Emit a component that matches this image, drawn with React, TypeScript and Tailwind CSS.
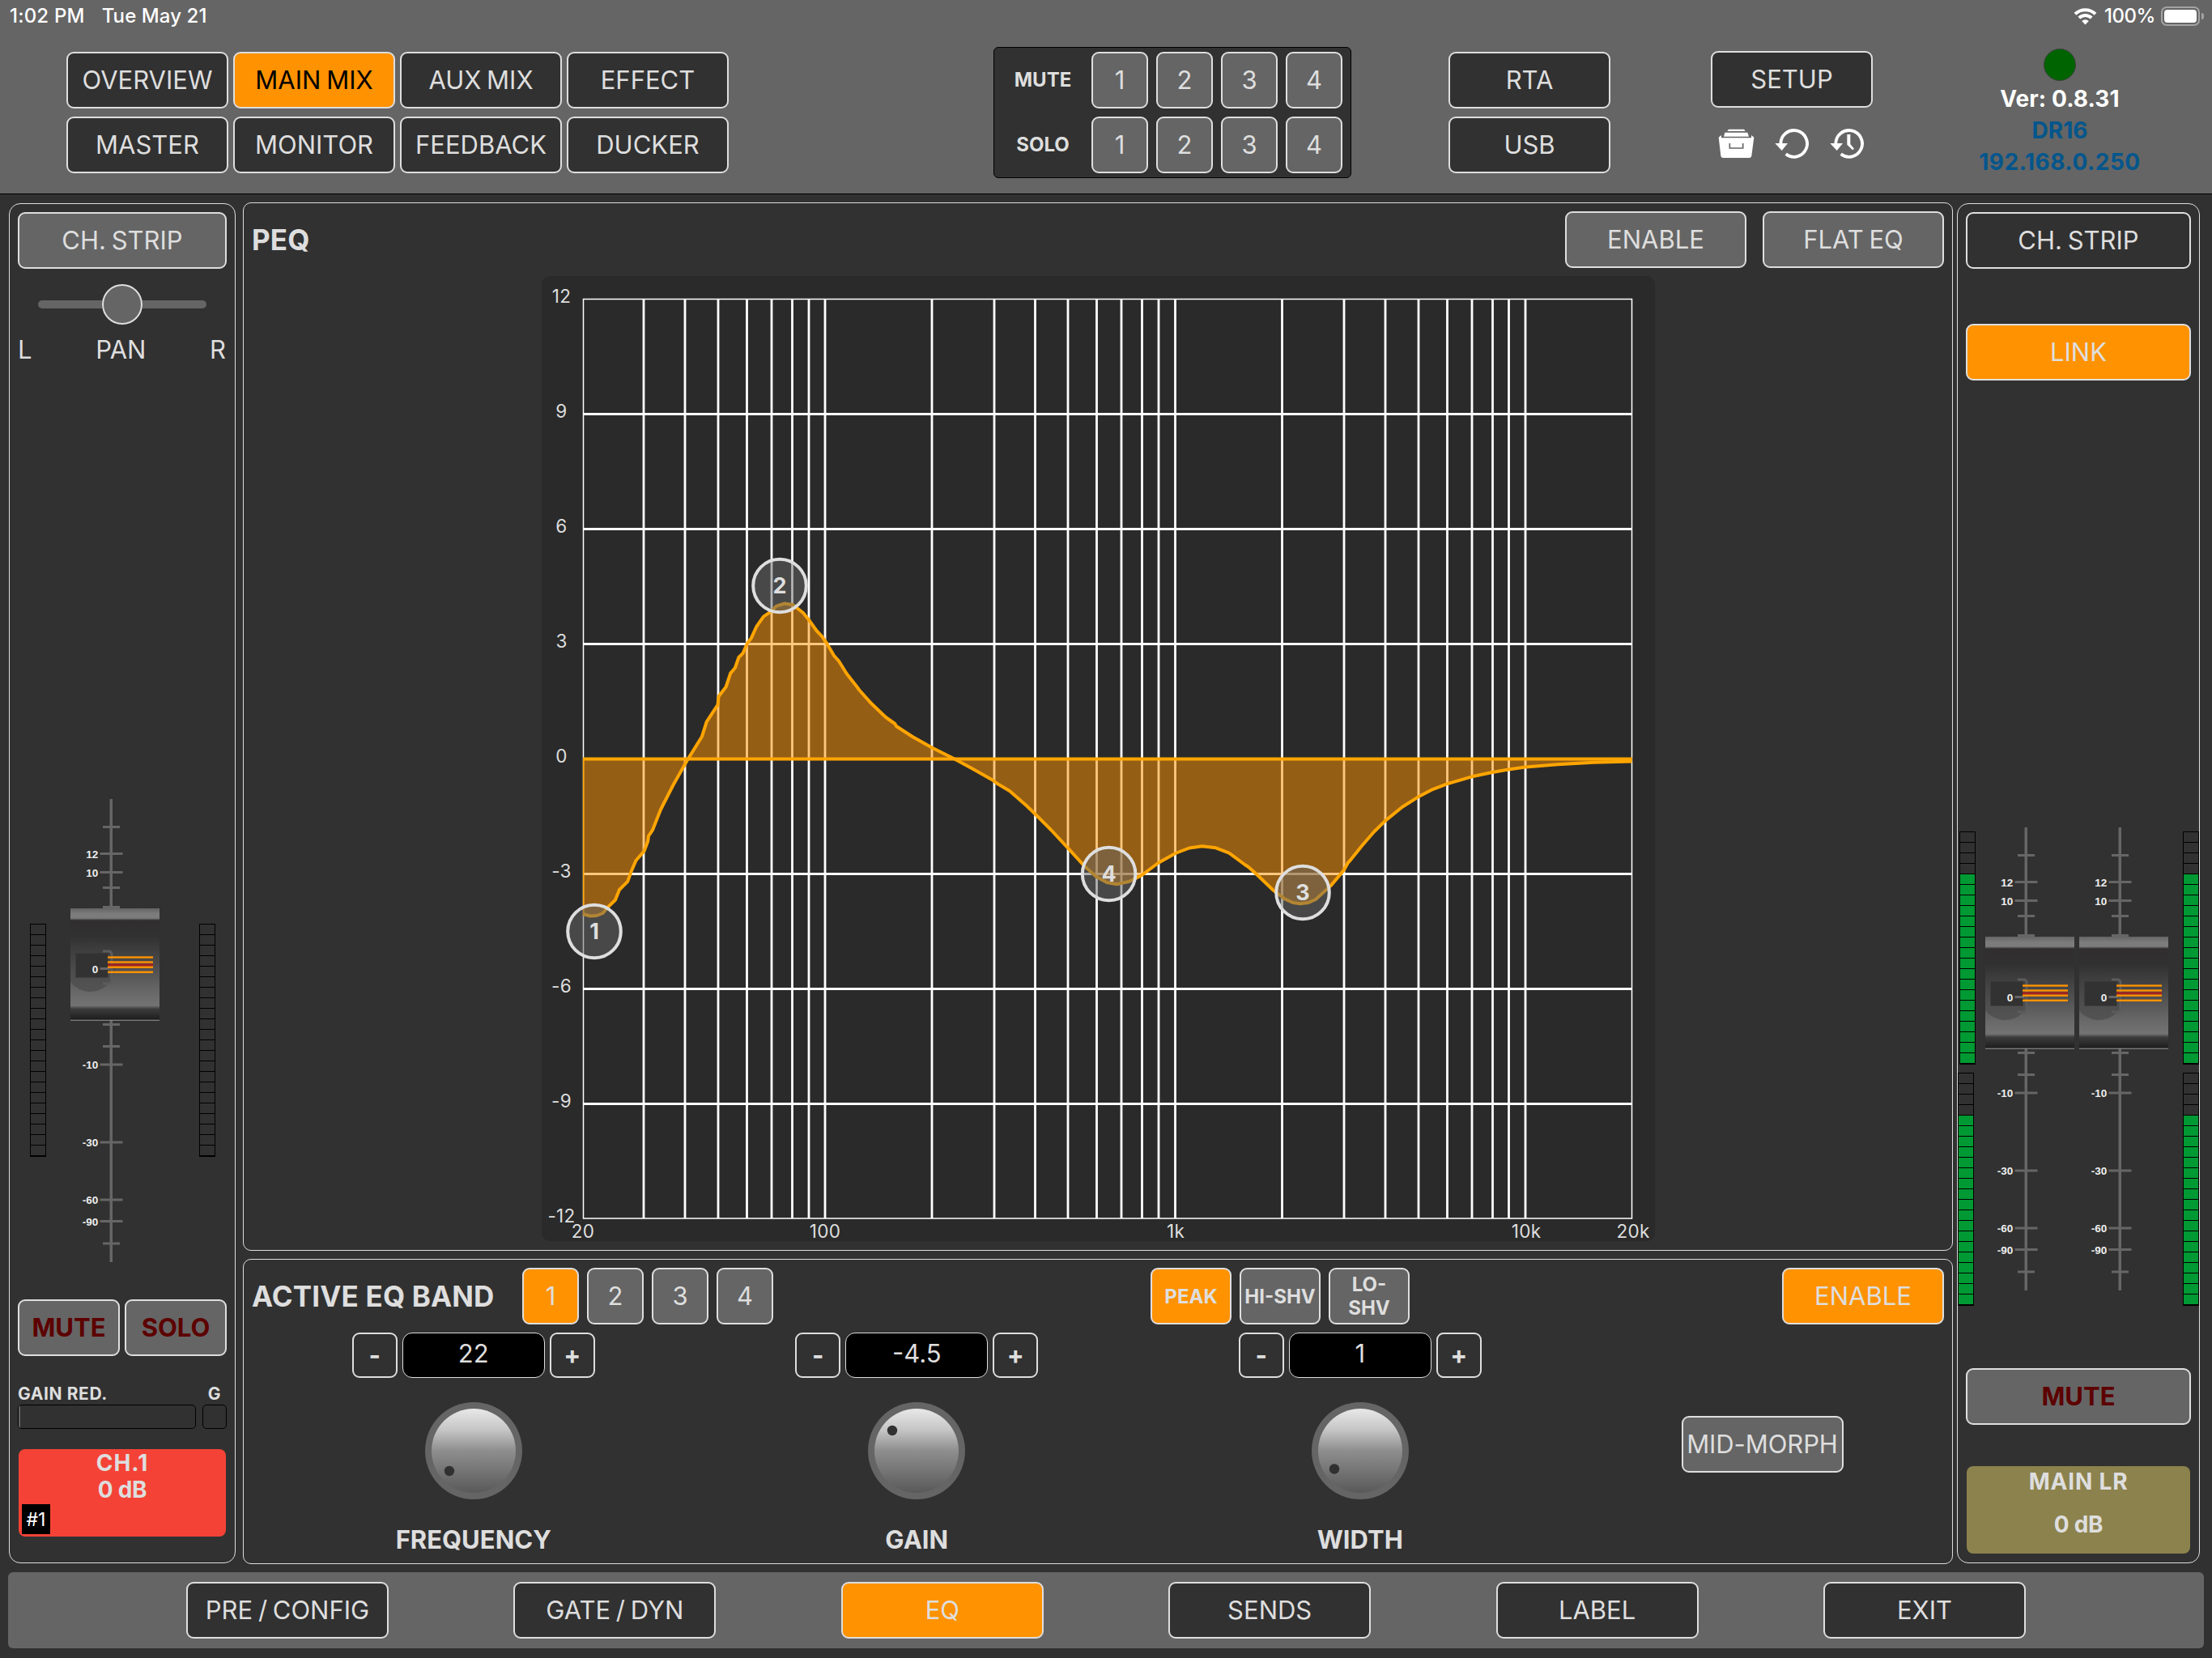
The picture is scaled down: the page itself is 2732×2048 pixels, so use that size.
import { useState } from 'react';
import clsx from 'clsx';

const navItems = ['OVERVIEW', 'MAIN MIX', 'AUX MIX', 'EFFECT', 'MASTER', 'MONITOR', 'FEEDBACK', 'DUCKER'];
const tabs = ['PRE / CONFIG', 'GATE / DYN', 'EQ', 'SENDS', 'LABEL', 'EXIT'];

type Tone = 'dark' | 'gray' | 'orange';

const tones: Record<Tone, string> = {
  dark: 'bg-[#313131]',
  gray: 'bg-[#656565]',
  orange: 'bg-[#ff9200]',
};

interface ButtonProps {
  label: string;
  tone?: Tone;
  className?: string;
  onClick?: () => void;
}

function Button({ label, tone = 'dark', className = 'text-[31px]', onClick }: ButtonProps) {
  return (
    <button
      onClick={onClick}
      className={clsx('h-[70px] shrink-0 rounded-[9px] border-2 border-[#dedede] flex items-center justify-center whitespace-nowrap [word-spacing:-2px]', tones[tone], className)}
    >
      {label}
    </button>
  );
}

function StatusBar() {
  return (
    <div className="h-[40px] shrink-0 flex items-center justify-between pl-[12px] pr-[10px] text-[24px] font-medium text-white">
      <div className="flex gap-[21px]">
        <span className="tracking-[0.2px]">1:02 PM</span>
        <span className="tracking-[0.1px]">Tue May 21</span>
      </div>
      <div className="flex items-center">
        <svg className="w-[29px] h-[22px]" viewBox="0 0 29 22" fill="none" stroke="#fff" strokeWidth="4">
          <path d="M2 8.2A18 18 0 0 1 27 8.2" />
          <path d="M6.8 13A11.2 11.2 0 0 1 22.2 13" />
          <path d="M14.5 21.5l-4.3-4.4a6.2 6.2 0 0 1 8.6 0z" fill="#fff" stroke="none" />
        </svg>
        <span className="ml-[9px] w-[64px] whitespace-nowrap tracking-[-0.5px]">100%</span>
        <div className="ml-[6px] w-[48px] h-[24px] rounded-[7px] border-2 border-[#a3a3a3] p-[2px]">
          <div className="w-full h-full rounded-[4px] bg-white" />
        </div>
        <div className="ml-[2px] w-[3px] h-[8px] rounded-r-full bg-[#a3a3a3]" />
      </div>
    </div>
  );
}

function ArchiveIcon() {
  return (
    <svg className="w-[45px] h-[38px]" viewBox="50 40 135 114">
      <path d="M89 45h57l5 7H84z" fill="#fff" />
      <path d="M75 57h84l5 15H71z" fill="#fff" />
      <path d="M52 75l10-8v10h111v-10l10 8-9 68q-1 8-9 8H69q-8 0-9-8z" fill="#fff" />
      <path d="M93 97v18h49V97" fill="none" stroke="#656565" strokeWidth="5" />
    </svg>
  );
}

function UndoIcon({ clock }: { clock?: boolean }) {
  return (
    <svg className="w-[42px] h-[38px]" viewBox="262 40 126 114">
      <path d="M284 99A49 49 0 1 1 303 137" fill="none" stroke="#fff" strokeWidth="11.5" />
      <path d="M263 97h47l-22 27z" fill="#fff" />
      {clock && <path d="M326 64h12v36l14 17-6 5-20-20z" fill="#fff" />}
    </svg>
  );
}

function Header() {
  const [page, setPage] = useState('MAIN MIX');

  return (
    <header className="h-[240px] shrink-0 bg-[#656565] border-b border-black">
      <StatusBar />
      <div className="flex items-start pl-[82px]">
        <div className="mt-[24px] grid grid-cols-4 gap-x-[6px] gap-y-[10px] w-[818px]">
          {navItems.map(item => (
            <Button
              key={item}
              label={item}
              tone={page === item ? 'orange' : 'dark'}
              className={page === item ? 'text-[31px] text-black' : 'text-[31px]'}
              onClick={() => setPage(item)}
            />
          ))}
        </div>

        {/* Mute / solo groups */}
        <div className="ml-[327px] mt-[18px] w-[442px] h-[162px] rounded-[6px] border border-black bg-[#313131] pt-[5px] pr-[10px] flex flex-col gap-[10px]">
          {['MUTE', 'SOLO'].map(group => (
            <div key={group} className="flex gap-[10px]">
              <div className="w-[110px] pl-[10px] flex items-center justify-center text-[24px] font-bold">{group}</div>
              {[1, 2, 3, 4].map(n => (
                <Button key={n} label={String(n)} tone="gray" className="w-[70px] text-[31px]" />
              ))}
            </div>
          ))}
        </div>

        <div className="ml-[120px] mt-[24px] flex flex-col gap-[10px]">
          <Button label="RTA" className="w-[200px] text-[31px]" />
          <Button label="USB" className="w-[200px] text-[31px]" />
        </div>

        <div className="ml-[124px] mt-[23px] w-[200px]">
          <Button label="SETUP" className="w-full text-[31px]" />
          <div className="mt-[25px] flex pl-[9px]">
            <ArchiveIcon />
            <span className="w-[25px]" />
            <UndoIcon />
            <span className="w-[26px]" />
            <UndoIcon clock />
          </div>
        </div>

        <div className="ml-[81px] mt-[20px] w-[300px] flex flex-col items-center text-[28px] leading-[39px] font-bold">
          <div className="w-[40px] h-[40px] rounded-full bg-[#006400] border border-[#404040]" />
          <div className="mt-[3px] text-white tracking-[0.1px]">Ver: 0.8.31</div>
          <div className="text-[#00568c]">DR16</div>
          <div className="text-[#00568c] tracking-[0.5px]">192.168.0.250</div>
        </div>
      </div>
    </header>
  );
}

function Meter({ lit = 0, className }: { lit?: number; className?: string }) {
  return (
    <div className={clsx('w-[20px] h-[288px] shrink-0 flex flex-col border border-black', className)}>
      {Array.from({ length: 22 }, (_, i) => (
        <div key={i} className={clsx('flex-1 border-b border-black', i >= 22 - lit && 'bg-[#009933]')} />
      ))}
    </div>
  );
}

const majorTicks = [
  { y: 67.5, label: '12' },
  { y: 90.5, label: '10' },
  { y: 328, label: '-10' },
  { y: 424, label: '-30' },
  { y: 495, label: '-60' },
  { y: 521.5, label: '-90' },
];
const minorTicks = [34.5, 109.5, 133.5, 278.5, 305.5, 549];

function Fader({ id }: { id: string }) {
  return (
    <svg className="w-[110px] h-[572px] shrink-0" viewBox="0 0 110 572">
      <defs>
        <linearGradient id={id} x1="0" y1="0" x2="0" y2="1">
          <stop offset="0" stopColor="#646464" />
          <stop offset="0.05" stopColor="#7c7c7c" />
          <stop offset="0.088" stopColor="#7c7c7c" />
          <stop offset="0.108" stopColor="#302e2e" />
          <stop offset="0.25" stopColor="#323131" />
          <stop offset="0.5" stopColor="#4c4b4b" />
          <stop offset="0.75" stopColor="#686868" />
          <stop offset="0.87" stopColor="#737373" />
          <stop offset="0.9" stopColor="#3c3c3c" />
          <stop offset="1" stopColor="#1c1c1c" />
        </linearGradient>
        <linearGradient id={`${id}-disc`} x1="0" y1="0" x2="0" y2="1">
          <stop offset="0" stopColor="#3a3a3a" stopOpacity="0.15" />
          <stop offset="1" stopColor="#4c4c4c" stopOpacity="0.75" />
        </linearGradient>
      </defs>
      <rect x="48.5" y="0" width="3.5" height="572" fill="#666" />
      {minorTicks.map(y => (
        <rect key={y} x="40" y={y - 1.5} width="21" height="3" fill="#666" />
      ))}
      {majorTicks.map(tick => (
        <g key={tick.label}>
          <rect x="36.5" y={tick.y - 1.5} width="28" height="3" fill="#666" />
          <text x="34.2" y={tick.y + 5} textAnchor="end" className="text-[13.5px] font-bold font-['Liberation_Sans',sans-serif]" fill="#eee">
            {tick.label}
          </text>
        </g>
      ))}
      {/* Cap */}
      <rect x="0" y="135" width="110" height="138" fill={`url(#${id})`} />
      <rect x="0" y="272.7" width="110" height="1" fill="#9a9a9a" />
      <path d="M0 188A31 31 0 1 1 0 226z" fill={`url(#${id}-disc)`} />
      <path d="M40 188h7q4 0 4 4v32q0 4-4 4h-7" fill="none" stroke="#5c5c5c" strokeWidth="3" />
      <rect x="6.5" y="190.5" width="40" height="30" fill="#323232" />
      <rect x="36.5" y="208" width="12" height="3" fill="#666" />
      <text x="34.2" y="214.5" textAnchor="end" className="text-[13.5px] font-bold font-['Liberation_Sans',sans-serif]" fill="#eee">
        0
      </text>
      <rect x="46" y="203.5" width="56" height="3" fill="#a52020" />
      {[195.5, 201.5, 207.7, 213.8].map(y => (
        <rect key={y} x="46" y={y - 1.2} width="56" height="2.4" fill="#ff9200" />
      ))}
    </svg>
  );
}

const gridX = [795, 846, 887, 922.5, 953, 978.5, 999, 1019, 1151, 1228, 1278.5, 1319, 1354.5, 1385, 1410.5, 1431, 1451.5, 1583.5, 1660, 1711, 1752, 1787.5, 1818, 1843.5, 1863.5, 1884];
const gridY = [511.5, 653.5, 795.5, 1079.5, 1221.5, 1363.5];
const dbLabels = [12, 9, 6, 3, 0, -3, -6, -9, -12];
const hzLabels = [
  { x: 720, label: '20' },
  { x: 1019, label: '100' },
  { x: 1452, label: '1k' },
  { x: 1885, label: '10k' },
  { x: 2017, label: '20k' },
];

const curve = [
  [720, 1129], [729, 1131.5], [737, 1131], [744.6, 1128], [750.7, 1120.6], [759.9, 1111.8], [765, 1099], [775.2, 1088.8],
  [779.3, 1077.3], [785.4, 1063], [795.6, 1051.3], [800.2, 1039], [801, 1032.6], [805.8, 1025.7], [816, 1000], [831.3, 970],
  [849.7, 937.6], [867, 909.7], [872.7, 891.7], [886.5, 870.7], [887.6, 860.3], [896.6, 848.5], [902.2, 831.6], [907.9, 825],
  [912.4, 812], [917.6, 806.8], [923.2, 794], [927.8, 788.4], [934.4, 773.8], [943, 761.6], [951.2, 756.2], [958.9, 748.6],
  [969, 745.5], [979.3, 747], [992, 757], [999.7, 766.6], [1008.9, 779.5], [1015, 785.8], [1021, 794.5], [1030, 809.8],
  [1036, 816.5], [1045.6, 832], [1058.9, 849], [1061, 852], [1076, 868.8], [1094, 886], [1105.3, 894], [1107, 897], [1127, 910], [1151, 923.5],
  [1178, 937], [1201, 949.5], [1226.7, 964], [1231, 967.5], [1247, 977], [1267.6, 995], [1280, 1007], [1298, 1025], [1320, 1048.6],
  [1339, 1069.5], [1354, 1083], [1367, 1090], [1379.3, 1092.3], [1395, 1088.8], [1410.4, 1081], [1430.4, 1066], [1451.8, 1054],
  [1468.8, 1047.5], [1484.7, 1045.3], [1501.7, 1047.3], [1518, 1053.6], [1537.4, 1068], [1542, 1071], [1551, 1079], [1573, 1100],
  [1586.7, 1110.4], [1597, 1115], [1606, 1116.3], [1616, 1115], [1625, 1111], [1644, 1093.6], [1659.7, 1075], [1665, 1065.5], [1667.4, 1063],
  [1682.7, 1044], [1697, 1027.5], [1711.2, 1013.6], [1732, 996.8], [1751.3, 984.6], [1768, 975.7], [1787, 968.3], [1818, 959.3], [1843, 954],
  [1863, 950.5], [1884, 947.6], [1924, 944.2], [1968, 941.8], [2015.5, 940.5],
];

const nodes = [
  { id: 2, x: 963, y: 723.5 },
  { id: 4, x: 1369.6, y: 1079.5 },
  { id: 3, x: 1609, y: 1102.5 },
  { id: 1, x: 734, y: 1150.5 },
];

function EqGraph() {
  const points = curve.map(p => p.join(',')).join(' ');

  return (
    <svg className="w-[1375px] h-[1192px] rounded-[10px] bg-[#2a2a2a]" viewBox="669 341 1375 1192">
      <g stroke="#fff" strokeWidth="2.8">
        {gridX.map(x => (
          <line key={x} x1={x} x2={x} y1="369" y2="1505" />
        ))}
        {gridY.map(y => (
          <line key={y} x1="720" x2="2015" y1={y} y2={y} />
        ))}
      </g>
      <rect x="720.5" y="369.5" width="1295" height="1135.5" fill="none" stroke="#fff" strokeWidth="1.5" />
      <polygon points={`720,937.5 ${points} 2015.5,937.5`} fill="#ff9200" fillOpacity="0.5" />
      <line x1="720" x2="2016" y1="937.5" y2="937.5" stroke="#ffa500" strokeWidth="4" />
      <line x1="720.7" x2="720.7" y1="937" y2="1130" stroke="#ffa500" strokeWidth="1.6" />
      <polyline points={points} fill="none" stroke="#ffa500" strokeWidth="4" strokeLinejoin="round" />
      <g className="text-[22.5px] tracking-[0.3px]" fill="#dedede" textAnchor="middle">
        {dbLabels.map((db, i) => (
          <text key={db} x="693.5" y={373.5 + i * 142}>{db}</text>
        ))}
        {hzLabels.map(hz => (
          <text key={hz.label} x={hz.x} y="1528.5">{hz.label}</text>
        ))}
      </g>
      {nodes.map(node => (
        <g key={node.id}>
          <circle cx={node.x} cy={node.y} r="32.8" fill="#656565" fillOpacity="0.5" stroke="#dedede" strokeWidth="4" />
          <text x={node.x} y={node.y + 9.5} textAnchor="middle" className="text-[27px] font-bold" fill="#dedede">{node.id}</text>
        </g>
      ))}
    </svg>
  );
}

function ChannelStrip() {
  return (
    <aside className="w-[280px] h-[1680px] mt-px shrink-0 rounded-[14px] border border-[#dedede] px-[10px] pt-[10px]">
      <Button label="CH. STRIP" tone="gray" className="w-full text-[31px]" />
      {/* Pan slider */}
      <div className="mt-[19px] mx-[25px] h-[50px] flex items-center justify-center">
        <div className="w-[79px] h-[10px] rounded-l-full bg-[#656565]" />
        <div className="w-[50px] h-[50px] rounded-full border-2 border-[#dedede] bg-[#656565]" />
        <div className="w-[79px] h-[10px] rounded-r-full bg-[#656565]" />
      </div>
      <div className="mt-[11px] h-[40px] flex items-center justify-between pr-px text-[31px]">
        <span>L</span>
        <span>PAN</span>
        <span>R</span>
      </div>
      <div className="mt-[535px] h-[572px] flex items-start pl-[15px]">
        <Meter className="mt-[154px]" />
        <div className="ml-[30px] mr-[49px]">
          <Fader id="cap-ch" />
        </div>
        <Meter className="mt-[154px]" />
      </div>
      <div className="mt-[46px] flex justify-between">
        <Button label="MUTE" tone="gray" className="w-[126px] text-[31px] font-bold text-[#5c0000]" />
        <Button label="SOLO" tone="gray" className="w-[126px] text-[31px] font-bold text-[#5c0000]" />
      </div>
      <div className="mt-[34px] h-[26px] flex items-center justify-between pr-[7px] text-[21px] font-bold tracking-[0.6px]">
        <span>GAIN RED.</span>
        <span>G</span>
      </div>
      <div className="h-[30px] flex justify-between">
        <div className="w-[220px] rounded-[5px] border border-black overflow-hidden">
          <div className="w-[2px] h-full bg-[#656565]" />
        </div>
        <div className="w-[30px] rounded-[5px] border border-black" />
      </div>
      <div className="mt-[25px] mx-px h-[108px] rounded-[8px] bg-[#f44336] text-[28px] leading-[33px] font-bold text-center flex flex-col justify-between">
        <div className="pt-px">
          <div className="tracking-[1px]">CH.1</div>
          <div className="tracking-[-0.3px]">0 dB</div>
        </div>
        <div className="ml-[4px] mb-[3px] w-[35px] h-[37px] bg-black text-white text-[23px] leading-[38px] font-normal">#1</div>
      </div>
    </aside>
  );
}

function MainStrip() {
  return (
    <aside className="ml-[5px] w-[300px] h-[1680px] mt-px shrink-0 rounded-[14px] border border-[#dedede] pt-[10px]">
      <div className="px-[10px]">
        <Button label="CH. STRIP" className="w-full text-[31px]" />
        <Button label="LINK" tone="orange" className="w-full mt-[68px] text-[31px]" />
      </div>
      <div className="mt-[552px] h-[591px] flex items-start">
        <div className="w-[34px] pt-[5px]">
          <Meter lit={18} className="ml-[2px]" />
          <Meter lit={18} className="mt-[10px]" />
        </div>
        <Fader id="cap-l" />
        <span className="w-[6px]" />
        <Fader id="cap-r" />
        <div className="ml-auto pt-[5px]">
          <Meter lit={18} />
          <Meter lit={18} className="mt-[10px]" />
        </div>
      </div>
      <div className="px-[10px]">
        <Button label="MUTE" tone="gray" className="w-full mt-[77px] text-[31px] font-bold text-[#5c0000]" />
        <div className="mt-[51px] mx-px h-[108px] rounded-[8px] bg-[#8c824d] text-[28px] font-bold text-center flex flex-col">
          <div className="mt-px h-[37px] leading-[37px] tracking-[0.8px]">MAIN LR</div>
          <div className="mt-[16px] h-[37px] leading-[37px] tracking-[-0.3px]">0 dB</div>
        </div>
      </div>
    </aside>
  );
}

const knobs = [
  { label: 'FREQUENCY', value: '22', dx: -30, dy: 25 },
  { label: 'GAIN', value: '-4.5', dx: -30, dy: -25 },
  { label: 'WIDTH', value: '1', dx: -32, dy: 22.5 },
];

function Knob({ label, value, dx, dy }: { label: string; value: string; dx: number; dy: number }) {
  return (
    <div className="w-[547.5px] flex flex-col items-center">
      <div className="flex gap-[6px]">
        <button className="w-[56px] h-[56px] rounded-[9px] border-2 border-[#dedede] text-[31px] font-bold">-</button>
        <div className="w-[176px] h-[56px] rounded-[12px] border border-[#dedede] bg-black text-center text-[31px] leading-[50px]">{value}</div>
        <button className="w-[56px] h-[56px] rounded-[9px] border-2 border-[#dedede] text-[31px] font-bold">+</button>
      </div>
      <svg className="mt-[30px] w-[120px] h-[120px]" viewBox="-60 -60 120 120">
        <defs>
          <linearGradient id={`knob-${label}`} x1="0" y1="0" x2="0" y2="1">
            <stop offset="0" stopColor="#e8e8e8" />
            <stop offset="0.25" stopColor="#c6c6c6" />
            <stop offset="0.5" stopColor="#8e8e8e" />
            <stop offset="1" stopColor="#595959" />
          </linearGradient>
        </defs>
        <circle r="60" fill="#656565" />
        <circle r="52" fill={`url(#knob-${label})`} />
        <circle cx={dx} cy={dy} r="6.2" fill="#313131" />
      </svg>
      <div className="mt-[30px] text-[31px] leading-[40px] font-bold">{label}</div>
    </div>
  );
}

function ActiveBand() {
  const [band, setBand] = useState(1);
  const [shape, setShape] = useState('PEAK');

  return (
    <section className="mt-[10px] h-[377px] rounded-[10px] border border-[#dedede] pt-[10px]">
      <div className="h-[70px] flex items-center pl-[10px] pr-[10px]">
        <h2 className="w-[334px] whitespace-nowrap text-[35px] font-bold tracking-[0.15px]">ACTIVE EQ BAND</h2>
        <div className="flex gap-[10px]">
          {[1, 2, 3, 4].map(n => (
            <Button key={n} label={String(n)} tone={band === n ? 'orange' : 'gray'} className="w-[70px] text-[31px]" onClick={() => setBand(n)} />
          ))}
        </div>
        <div className="ml-[466px] flex gap-[10px]">
          {['PEAK', 'HI-SHV', 'LO-SHV'].map(name => (
            <button
              key={name}
              onClick={() => setShape(name)}
              className={clsx(
                'w-[100px] h-[70px] rounded-[9px] border-2 border-[#dedede] flex items-center justify-center text-center text-[24px] leading-[29px] font-bold',
                shape === name ? 'bg-[#ff9200]' : 'bg-[#656565]'
              )}
            >
              {name === 'LO-SHV' ? <span className="w-[60px]">LO-<br />SHV</span> : <span className="whitespace-nowrap">{name}</span>}
            </button>
          ))}
        </div>
        <Button label="ENABLE" tone="orange" className="ml-auto w-[200px] text-[31px]" />
      </div>
      <div className="mt-[10px] flex items-start pl-[10px]">
        {knobs.map(knob => (
          <Knob key={knob.label} {...knob} />
        ))}
        <Button label="MID-MORPH" tone="gray" className="ml-[123px] mt-[103px] w-[200px] text-[31px] tracking-[-0.1px]" />
      </div>
    </section>
  );
}

export default function App() {
  const [tab, setTab] = useState('EQ');

  return (
    <div className="w-[2732px] h-[2048px] overflow-hidden flex flex-col bg-[#313131] text-[#dedede] font-['Inter',sans-serif]">
      <Header />

      <main className="mt-[10px] h-[1682px] shrink-0 flex pl-[11px]">
        <ChannelStrip />
        <div className="ml-[9px] w-[2112px] shrink-0">
          <section className="h-[1295px] rounded-[10px] border border-[#dedede] pt-[10px]">
            <div className="h-[70px] flex items-center gap-[20px] pl-[10px] pr-[10px]">
              <h1 className="mr-auto text-[35px] font-bold tracking-[0.15px]">PEQ</h1>
              <Button label="ENABLE" tone="gray" className="w-[224px] text-[31px]" />
              <Button label="FLAT EQ" tone="gray" className="w-[224px] text-[31px]" />
            </div>
            <div className="mt-[10px] flex justify-center">
              <EqGraph />
            </div>
          </section>
          <ActiveBand />
        </div>
        <MainStrip />
      </main>

      <footer className="mt-[10px] mx-[10px] h-[94px] shrink-0 rounded-[6px] bg-[#656565] flex items-center justify-center gap-[154.4px]">
        {tabs.map(name => (
          <Button key={name} label={name} tone={tab === name ? 'orange' : 'dark'} className="w-[250px] text-[31px]" onClick={() => setTab(name)} />
        ))}
      </footer>
    </div>
  );
}
